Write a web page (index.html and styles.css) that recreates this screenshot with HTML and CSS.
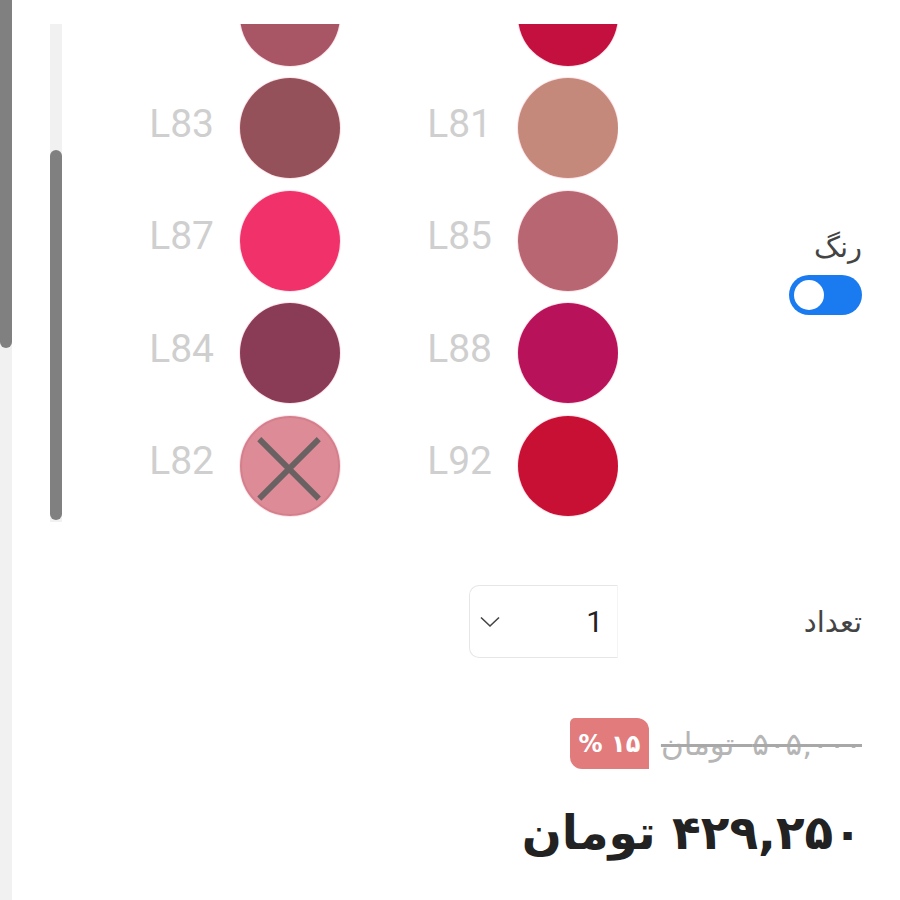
FILE: index.html
```html
<!DOCTYPE html>
<html lang="fa">
<head>
<meta charset="utf-8">
<title>انتخاب رنگ</title>
<link rel="stylesheet" href="styles.css">
</head>
<body>
<div class="page">
  <div class="page-scroll"><div class="page-thumb"></div></div>
  <main class="form" dir="rtl">
    <section class="row row-color">
      <div class="label-col">
        <div class="label">رنگ</div>
        <div class="switch"><span class="knob"></span></div>
      </div>
      <div class="swatch-box">
        <div class="swatch-viewport">
          <div class="swatch-grid">
            <div class="swatch"><span class="dot c-l89"></span><span class="code">L89</span></div>
            <div class="swatch"><span class="dot c-l86"></span><span class="code">L86</span></div>
            <div class="swatch"><span class="dot c-l81"></span><span class="code">L81</span></div>
            <div class="swatch"><span class="dot c-l83"></span><span class="code">L83</span></div>
            <div class="swatch"><span class="dot c-l85"></span><span class="code">L85</span></div>
            <div class="swatch"><span class="dot c-l87"></span><span class="code">L87</span></div>
            <div class="swatch"><span class="dot c-l88"></span><span class="code">L88</span></div>
            <div class="swatch"><span class="dot c-l84"></span><span class="code">L84</span></div>
            <div class="swatch"><span class="dot c-l92"></span><span class="code">L92</span></div>
            <div class="swatch"><span class="dot c-l82 unavailable">
              <svg class="cross" viewBox="0 0 100 100" width="100" height="100"><path d="M18 22 L80 84 M80 22 L18 84"/></svg>
            </span><span class="code">L82</span></div>
          </div>
        </div>
        <div class="box-scroll"><div class="box-thumb"></div></div>
      </div>
    </section>

    <section class="row row-qty">
      <div class="label-col">
        <div class="label">تعداد</div>
      </div>
      <div class="select">
        <span class="select-value">1</span>
        <svg class="chevron" viewBox="0 0 20 12" width="20" height="12"><path d="M1 1.5 L10 10 L19 1.5"/></svg>
      </div>
    </section>

    <section class="price">
      <div class="old-line">
        <span class="old-price">۵۰۵,۰۰۰ تومان</span>
        <span class="badge">۱۵ %</span>
      </div>
      <div class="new-price">۴۲۹,۲۵۰ تومان</div>
    </section>
  </main>
</div>
</body>
</html>
```
FILE: styles.css
```css
html, body {
  margin: 0;
  padding: 0;
  background: #ffffff;
}
body {
  font-family: "DejaVu Sans", Roboto, sans-serif;
  color: #222;
}
.page {
  display: flex;
  width: 900px;
  height: 900px;
  overflow: hidden;
}
.page-scroll {
  width: 12px;
  height: 900px;
  background: #f1f1f1;
  flex: none;
}
.page-thumb {
  height: 348px;
  background: #808080;
  border-radius: 0 0 6px 6px;
}
.form {
  flex: 1;
  padding-right: 38px;
  display: flex;
  flex-direction: column;
}
.row {
  display: flex;
  align-items: center;
}
.label-col {
  width: 244px;
  flex: none;
  display: flex;
  flex-direction: column;
  align-items: flex-start;
}
.label {
  font-size: 29px;
  color: #444;
  line-height: 40px;
}
.row-color {
  margin-top: 24px;
}
.row-color .label {
  margin-bottom: 8px;
  margin-top: -4px;
}
.switch {
  width: 73px;
  height: 40px;
  border-radius: 20px;
  background: #1a7bf0;
  box-sizing: border-box;
  padding: 5px;
  display: flex;
  justify-content: flex-end;
}
.knob {
  width: 30px;
  height: 30px;
  border-radius: 50%;
  background: #fff;
}
.swatch-box {
  display: flex;
  width: 568px;
  height: 498px;
  flex: none;
}
.swatch-viewport {
  width: 556px;
  height: 498px;
  overflow: hidden;
}
.swatch-grid {
  margin-top: -58.5px;
  display: grid;
  grid-template-columns: 278px 278px;
  row-gap: 12.5px;
}
.swatch {
  display: flex;
  align-items: center;
  gap: 26px;
}
.dot {
  width: 100px;
  height: 100px;
  border-radius: 50%;
  flex: none;
  box-shadow: 0 0 0 1px rgba(255, 210, 220, 0.6);
  display: flex;
}
.code {
  font-family: Roboto, sans-serif;
  font-size: 39px;
  color: #cfcfcf;
  direction: ltr;
  margin-bottom: 9px;
}
.c-l89 { background: #c4103f; }
.c-l86 { background: #a85565; }
.c-l81 { background: #c4897a; }
.c-l83 { background: #955159; }
.c-l85 { background: #b86672; }
.c-l87 { background: #f0316a; }
.c-l88 { background: #b8135a; }
.c-l84 { background: #8a3c56; }
.c-l92 { background: #c81034; }
.c-l82 { background: #dc8b97; }
.unavailable {
  box-sizing: border-box;
  border: 2px solid #d47f8c;
}
.cross {
  width: 96px;
  height: 96px;
}
.cross path {
  stroke: #6a6262;
  stroke-width: 6;
  fill: none;
}
.box-scroll {
  width: 12px;
  height: 498px;
  background: #f1f1f1;
  flex: none;
}
.box-thumb {
  margin-top: 126px;
  height: 370px;
  background: #808080;
  border-radius: 6px;
}
.row-qty {
  margin-top: 63px;
}
.select {
  width: 149px;
  height: 73px;
  box-sizing: border-box;
  border: 1.5px solid #e6e6e6;
  border-right-color: #f4f4f4;
  border-radius: 10px 0 0 10px;
  display: flex;
  align-items: center;
  justify-content: space-between;
  padding: 0 14px 0 10px;
}
.select-value {
  font-family: Roboto, sans-serif;
  font-size: 30px;
  color: #222;
}
.chevron path {
  stroke: #444;
  stroke-width: 1.6;
  fill: none;
}
.price {
  margin-top: 60px;
  display: flex;
  flex-direction: column;
  align-items: flex-start;
}
.old-line {
  display: flex;
  align-items: center;
  gap: 12px;
}
.old-price {
  font-size: 31px;
  word-spacing: 8px;
  letter-spacing: 2px;
  color: #b5b5b5;
  text-decoration: line-through;
  text-decoration-color: #a8a8a8;
}
.badge {
  background: #e27b7c;
  color: #fff;
  font-weight: bold;
  font-size: 24px;
  width: 79px;
  height: 51px;
  display: flex;
  align-items: center;
  justify-content: center;
  border-radius: 5px 12px 0 12px;
}
.new-price {
  margin-top: 36px;
  font-size: 47px;
  font-weight: bold;
  color: #222;
}
```
